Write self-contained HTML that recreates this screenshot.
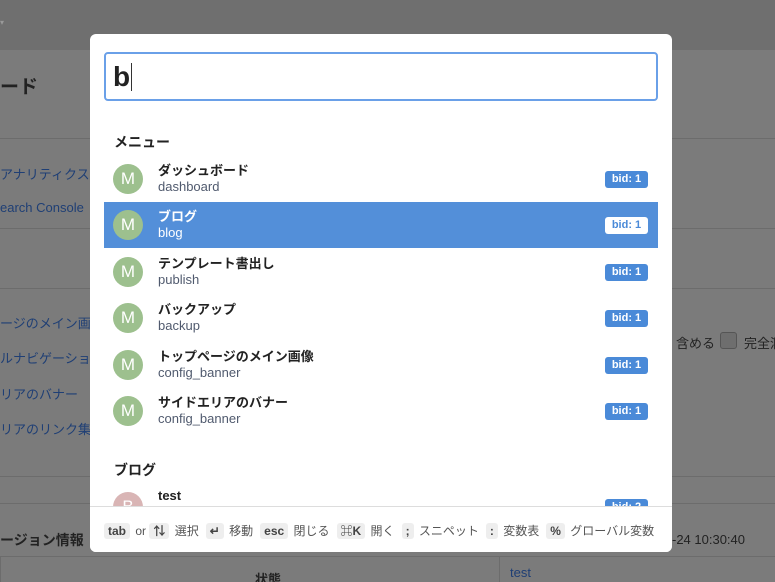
<!DOCTYPE html>
<html><head><meta charset="utf-8"><style>
*{margin:0;padding:0;box-sizing:border-box}
html,body{width:775px;height:582px;overflow:hidden}
body{background:#7b7b7b;font-family:"Liberation Sans","Noto Sans CJK JP",sans-serif;position:relative}
.abs{position:absolute;white-space:nowrap}
.bl{color:#1f3f75;font-size:13px}
.line{position:absolute;height:1px;background:#6c6c6c}
.modal{position:absolute;left:90px;top:34px;width:582px;height:518px;background:#fff;border-radius:6px;overflow:hidden}
.inp{position:absolute;left:14px;top:18px;width:554px;height:49px;border:2px solid #6aa0e8;border-radius:4px;font-size:28px;font-weight:bold;color:#222;padding:8px 0 0 7px;line-height:30px}
.inp i{display:inline-block;width:1px;height:28px;background:#333;vertical-align:-5px;margin-left:1px}
.h{position:absolute;left:24px;font-size:14px;font-weight:bold;color:#222}
.row{position:absolute;left:14px;width:554px;height:46px}
.row.sel{background:#538fd9}
.av{position:absolute;left:9px;top:8px;width:30px;height:30px;border-radius:50%;background:#9dc08e;color:#fff;font-size:17px;text-align:center;line-height:30px}
.t1{position:absolute;left:54px;top:4px;font-size:13px;font-weight:bold;color:#222}
.t2{position:absolute;left:54px;top:23px;font-size:13px;color:#505a6e}
.sel .t1,.sel .t2{color:#fff}
.bd{position:absolute;left:501px;top:15px;width:43px;height:17px;border-radius:3px;background:#4a8ad8;color:#fff;font-size:11px;font-weight:bold;text-align:center;line-height:17px}
.sel .bd{background:#fff;color:#4a8ad8}
.foot{position:absolute;left:0;top:472px;width:582px;height:46px;border-top:1px solid #ddd;background:#fff;font-size:12px;color:#555;padding:15px 0 0 14px;white-space:nowrap}
.k{display:inline-block;background:#eee;border-radius:3px;padding:0 4px;font-weight:bold;color:#444;line-height:16px;margin-right:2px}
.foot span.s{margin-right:7px}
</style></head><body>
<div class="abs" style="left:0;top:0;width:775px;height:50px;background:#6f6f6f"></div>
<div class="abs" style="left:0;top:18px;font-size:8px;color:#999">▾</div>
<div class="abs" style="left:0;top:72px;font-size:19px;font-weight:bold;color:#222">ード</div>
<div class="line" style="left:0;top:138px;width:775px"></div>
<div class="abs bl" style="left:0;top:164px">アナリティクス</div>
<div class="abs bl" style="left:0;top:200px">earch Console</div>
<div class="line" style="left:0;top:228px;width:775px"></div>
<div class="line" style="left:0;top:288px;width:775px"></div>
<div class="abs bl" style="left:0;top:313px">ージのメイン画</div>
<div class="abs bl" style="left:0;top:348px">ルナビゲーショ</div>
<div class="abs bl" style="left:0;top:384px">リアのバナー</div>
<div class="abs bl" style="left:0;top:419px">リアのリンク集</div>
<div class="abs" style="left:676px;top:333px;font-size:13px;color:#222">含める</div>
<div class="abs" style="left:720px;top:332px;width:17px;height:17px;border:1px solid #555;border-radius:3px;background:#6e6e6e"></div>
<div class="abs" style="left:744px;top:333px;font-size:13px;color:#222">完全涸</div>
<div class="line" style="left:0;top:476px;width:775px"></div>
<div class="line" style="left:0;top:503px;width:775px"></div>
<div class="abs" style="left:0;top:530px;font-size:14px;font-weight:bold;color:#222">ージョン情報</div>
<div class="abs" style="left:672px;top:532px;font-size:13px;color:#222">-24 10:30:40</div>
<div class="line" style="left:0;top:556px;width:775px"></div>
<div class="abs" style="left:0;top:556px;width:500px;height:30px;border:1px solid #6c6c6c"></div>
<div class="abs" style="left:255px;top:569px;font-size:13px;font-weight:bold;color:#222">状態</div>
<div class="abs" style="left:510px;top:565px;font-size:13px;color:#1f3f75">test</div>
<div class="modal">
<div class="inp">b<i></i></div>
<div class="h" style="top:98px">メニュー</div>
<div class="row" style="top:122px"><div class="av">M</div><div class="t1">ダッシュボード</div><div class="t2">dashboard</div><div class="bd">bid: 1</div></div>
<div class="row sel" style="top:168px"><div class="av">M</div><div class="t1">ブログ</div><div class="t2">blog</div><div class="bd">bid: 1</div></div>
<div class="row" style="top:215px"><div class="av">M</div><div class="t1">テンプレート書出し</div><div class="t2">publish</div><div class="bd">bid: 1</div></div>
<div class="row" style="top:261px"><div class="av">M</div><div class="t1">バックアップ</div><div class="t2">backup</div><div class="bd">bid: 1</div></div>
<div class="row" style="top:308px"><div class="av">M</div><div class="t1">トップページのメイン画像</div><div class="t2">config_banner</div><div class="bd">bid: 1</div></div>
<div class="row" style="top:354px"><div class="av">M</div><div class="t1">サイドエリアのバナー</div><div class="t2">config_banner</div><div class="bd">bid: 1</div></div>
<div class="h" style="top:426px">ブログ</div>
<div class="row" style="top:450px"><div class="av" style="background:#d9b5b5">B</div><div class="t1">test</div><div class="bd" style="top:15px">bid: 2</div></div>
<div class="foot"><span class="k">tab</span> or <span class="k">⇅</span> <span class="s">選択</span><span class="k">↵</span> <span class="s">移動</span><span class="k">esc</span> <span class="s">閉じる</span><span class="k">⌘K</span> <span class="s">開く</span><span class="k">;</span> <span class="s">スニペット</span><span class="k">:</span> <span class="s">変数表</span><span class="k">%</span> グローバル変数</div>
</div>
</body></html>
